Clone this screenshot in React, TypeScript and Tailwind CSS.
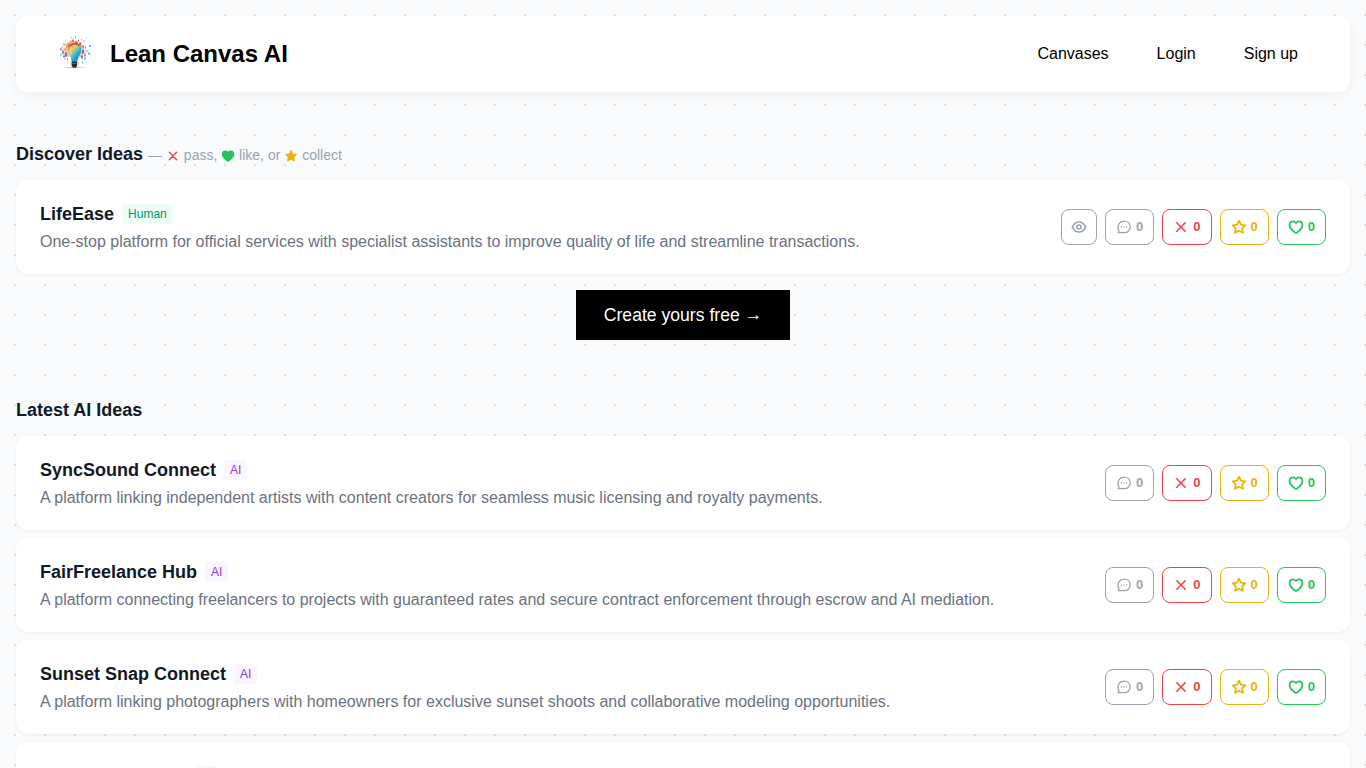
import type { ReactNode } from "react";

const HEART =
  "M10.41 20.2C7.59 18.1 2.4 13.4 2.4 9.2C2.4 5.9 4.5 3.6 7.2 3.6C9 3.6 10.6 4.4 12 6C13.4 4.4 15 3.6 16.8 3.6C19.5 3.6 21.6 5.9 21.6 9.2C21.6 13.4 16.41 18.1 13.59 20.2C12.64 20.9 11.36 20.9 10.41 20.2Z";
const STAR =
  "M12 2.6L14.9 8.6L21.4 9.5L16.7 14L17.9 20.7L12 17.5L6.1 20.7L7.3 14L2.6 9.5L9.1 8.6Z";
const CROSS = "M18.3 5.7L5.7 18.3M5.7 5.7L18.3 18.3";

function Icon({ children, className = "size-4 stroke-[2.4]" }: { children: ReactNode; className?: string }) {
  return (
    <svg viewBox="0 0 24 24" fill="none" stroke="currentColor" strokeLinecap="round" strokeLinejoin="round" className={`shrink-0 ${className}`}>
      {children}
    </svg>
  );
}

function Logo() {
  return (
    <svg viewBox="0 0 38 38" className="size-[38px]">
      <defs>
        <linearGradient id="bulb" x1="0.1" y1="0.1" x2="0.8" y2="0.9">
          <stop offset="0" stopColor="#f1783f" />
          <stop offset="0.28" stopColor="#f5c64e" />
          <stop offset="0.5" stopColor="#7fc9b0" />
          <stop offset="0.68" stopColor="#22b3da" />
          <stop offset="1" stopColor="#1583ad" />
        </linearGradient>
        <radialGradient id="ground">
          <stop offset="0" stopColor="#8d979c" />
          <stop offset="1" stopColor="#ffffff" stopOpacity="0" />
        </radialGradient>
      </defs>
      <g transform="translate(0 -0.6)">
        <ellipse cx="18.5" cy="33" rx="16" ry="1.3" fill="url(#ground)" />
        <path d="M9 23L7 19L9 17L6 13L10 13L9 9L13 10L14 6L17 9L20 5L22 9L26 7L26 11L29 12L27 16L31 19L27 20L27 24L23 22L13 22Z" fill="#b96f82" opacity=".4" />
        <path d="M7 9h2v2H7zM11 8h3v2h-3zM5 12h2v1H5zM10 11h3v3h-3zM14 6h2v2h-2zM8 14h2v2H8z" fill="#f19a3e" opacity=".85" />
        <path d="M16 5h2v3h-2zM19 7h3v3h-3zM23 8h2v4h-2zM12 10h2v2h-2zM26 11h2v2h-2zM22 5h1v2h-1z" fill="#d94d3f" opacity=".8" />
        <path d="M4 14h2v2H4zM6 16h2v3H6zM9 18h2v4H9zM7 21h2v2H7zM26 15h2v4h-2zM28 20h2v2h-2zM25 21h2v3h-2zM11 24h1v2h-1zM29 12h1v2h-1z" fill="#704061" opacity=".65" />
        <path d="M33 10.6h2v2h-2zM29 16h3v1h-3zM32 18h2v2h-2zM28 23h2v2h-2zM5 19h2v1H5zM4 20h1v2H4zM8 24h2v1H8zM26 27h1v2h-1zM19 2h1v2h-1zM27 6h2v1h-2z" fill="#38b9dc" opacity=".85" />
        <path d="M15 2h1v2h-1zM9 5h1v2H9zM25 4h1v2h-1zM30 3h1v1h-1zM5 9h1v1H5zM32 15h1v1h-1zM11 27h1v1h-1zM22 28h1v2h-1zM30 27h1v1h-1zM5 24h1v1H5z" fill="#9fdcec" />
        <path d="M18.5 9C13.2 9 11.8 12.5 12.2 16C12.7 20 15.2 22.5 15.8 27.3H21.2C21.7 22.5 24.8 20 25.2 16C25.5 12 23.5 9 18.5 9Z" fill="url(#bulb)" />
        <path d="M13.5 11.3Q18.5 7 23.5 11.3" fill="none" stroke="#d6493a" strokeWidth="1.6" />
        <path d="M15.5 12.5C14 14.5 14 17 15.5 20" fill="none" stroke="#fbd86a" strokeWidth="1.6" />
        <path d="M15.6 27h5.6v4l-1.3 2.2h-3l-1.3-2.2z" fill="#33292e" />
        <path d="M15.7 29h5.2" stroke="#8b7c7d" strokeWidth=".6" />
      </g>
    </svg>
  );
}

function Action({ color, children }: { color: string; children: ReactNode }) {
  return (
    <button className={`flex h-9 items-center gap-1 rounded-lg border bg-white px-2.5 text-[13px] font-bold leading-4 ${color}`}>
      {children}
      <span>0</span>
    </button>
  );
}

type Idea = { title: string; by: "AI" | "Human"; text: string };

function IdeaCard({ idea }: { idea: Idea }) {
  const human = idea.by === "Human";
  return (
    <article className="flex h-[94px] shrink-0 items-center justify-between rounded-xl bg-white px-6 shadow-[0_1px_3px_rgba(0,0,0,0.06)]">
      <div className="flex h-[46px] flex-col gap-2">
        <div className="flex h-5 items-center gap-2">
          <h3 className="text-lg font-bold leading-5 text-[#111827]">{idea.title}</h3>
          <span className={`rounded px-1.5 py-0.5 text-xs leading-4 ${human ? "bg-[#ecfdf5] text-[#059669]" : "bg-[#faf5ff] text-[#9333ea]"}`}>{idea.by}</span>
        </div>
        <p className="text-base leading-5 text-[#6b7280]">{idea.text}</p>
      </div>
      <div className="flex gap-2">
        {human && (
          <button className="flex size-9 items-center justify-center rounded-lg border border-[#9ca3af] bg-white text-[#9ca3af]">
            <Icon className="size-4 stroke-[2.4]">
              <path d="M22 12C22 12.4 21.8 12.6 21.54 12.96C20 15.8 17 19.6 12 19.6C7 19.6 4 15.8 2.46 12.96C2.2 12.6 2 12.4 2 12C2 11.6 2.2 11.4 2.46 11.05C4 8.2 7 4.4 12 4.4C17 4.4 20 8.2 21.54 11.05C21.8 11.4 22 11.6 22 12Z" />
              <circle cx="12" cy="12" r="3" />
            </Icon>
          </button>
        )}
        <Action color="border-[#9ca3af] text-[#9ca3af]">
          <Icon className="size-4 stroke-2">
            <path d="M12.5 3.2C17.7 3.2 21.3 7 21.3 11.8C21.3 16.6 17.7 20.5 12.5 20.5H3.2C3.6 19.4 4.4 18.6 4.4 17.5C3.4 16 2.9 14 2.9 11.8C2.9 7 7.2 3.2 12.5 3.2Z" />
            <path d="M8 12h.01M12 12h.01M16 12h.01" />
          </Icon>
        </Action>
        <Action color="border-[#ef4444] text-[#ef4444]">
          <Icon>
            <path d={CROSS} />
          </Icon>
        </Action>
        <Action color="border-[#eab308] text-[#eab308]">
          <Icon className="size-4 stroke-[2.7]">
            <path d={STAR} />
          </Icon>
        </Action>
        <Action color="border-[#22c55e] text-[#22c55e]">
          <Icon className="size-4 stroke-[2.7]">
            <path d={HEART} />
          </Icon>
        </Action>
      </div>
    </article>
  );
}

const discover: Idea = {
  title: "LifeEase",
  by: "Human",
  text: "One-stop platform for official services with specialist assistants to improve quality of life and streamline transactions.",
};

const latest: Idea[] = [
  { title: "SyncSound Connect", by: "AI", text: "A platform linking independent artists with content creators for seamless music licensing and royalty payments." },
  { title: "FairFreelance Hub", by: "AI", text: "A platform connecting freelancers to projects with guaranteed rates and secure contract enforcement through escrow and AI mediation." },
  { title: "Sunset Snap Connect", by: "AI", text: "A platform linking photographers with homeowners for exclusive sunset shoots and collaborative modeling opportunities." },
];

export default function App() {
  return (
    <div className="h-screen overflow-hidden bg-[#f8fafc] bg-[radial-gradient(circle,#dddddd_1px,transparent_1px)] bg-[size:30px_30px] p-4 font-['Liberation_Sans',Arial,sans-serif]">
      <header className="flex h-[76px] items-center justify-between rounded-xl bg-white pl-10 pr-[52px] shadow-[0_4px_12px_rgba(0,0,0,0.04)]">
        <div className="flex items-center gap-4 text-2xl font-bold text-black">
          <Logo />
          <span>Lean Canvas AI</span>
        </div>
        <nav className="flex gap-12 text-base text-black">
          <a>Canvases</a>
          <a>Login</a>
          <a>Sign up</a>
        </nav>
      </header>

      <main>
        <section className="pt-12">
          <div className="flex h-7 items-baseline gap-[5px]">
            <h2 className="text-lg font-bold leading-7 text-[#111827]">Discover Ideas</h2>
            <p className="flex items-center gap-[3.9px] text-sm leading-5 text-[#9ca3af]">
              <span>—</span>
              <Icon className="mt-0.5 size-3.5 stroke-[2.4] text-[#ef4444]">
                <path d={CROSS} />
              </Icon>
              <span>pass,</span>
              <Icon className="mt-0.5 size-3.5 stroke-2 text-[#22c55e]">
                <path d={HEART} fill="currentColor" />
              </Icon>
              <span>like, or</span>
              <Icon className="mt-0.5 size-3.5 stroke-[1.5] text-[#eab308]">
                <path d={STAR} fill="currentColor" />
              </Icon>
              <span>collect</span>
            </p>
          </div>
          <div className="pt-3">
            <IdeaCard idea={discover} />
          </div>
          <div className="flex justify-center pt-4">
            <button className="h-[50px] bg-black px-7 text-[17.6px] text-white">
              Create yours free <span className="inline-block -translate-y-px">→</span>
            </button>
          </div>
        </section>

        <section className="pt-14">
          <h2 className="text-lg font-bold leading-7 text-[#111827]">Latest AI Ideas</h2>
          <div className="flex flex-col gap-2 pt-3">
            {latest.map((idea) => (
              <IdeaCard key={idea.title} idea={idea} />
            ))}
            <div className="h-[94px] rounded-xl bg-white pl-[179px] pt-6 shadow-[0_1px_3px_rgba(0,0,0,0.06)]">
              <div className="h-5 w-[22px] rounded bg-[#faf5ff]" />
            </div>
          </div>
        </section>
      </main>
    </div>
  );
}
